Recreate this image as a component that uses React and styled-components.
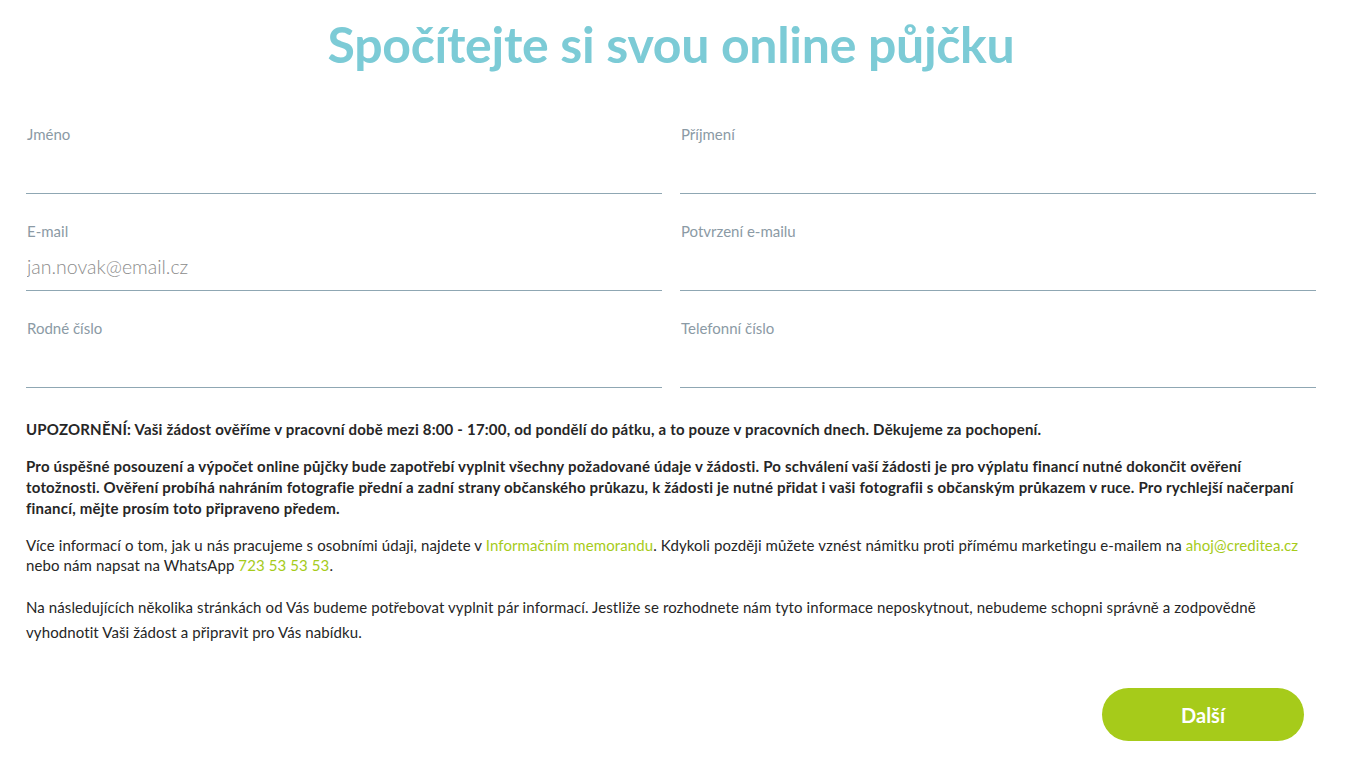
import React from 'react';
import styled, { createGlobalStyle } from 'styled-components';

const GlobalStyle = createGlobalStyle`
  html, body {
    margin: 0;
    padding: 0;
    background: #fff;
    font-family: Lato, "Open Sans", sans-serif;
    color: #262626;
  }
`;

const Page = styled.div`
  width: 1290px;
  padding: 13px 0 0 26px;
`;

const Title = styled.h1`
  margin: 0 0 50px;
  text-align: center;
  font-size: 50px;
  line-height: 62px;
  font-weight: 700;
  color: #7ccbd6;
  letter-spacing: -0.3px;
`;

const FieldGrid = styled.div`
  display: grid;
  grid-template-columns: 1fr 1fr;
  column-gap: 18px;
  row-gap: 28px;
`;

const Field = styled.label`
  box-sizing: border-box;
  display: flex;
  flex-direction: column;
  border-bottom: 1px solid #8fa7b3;
  height: 69px;
`;

const Label = styled.span`
  font-size: 15px;
  line-height: 18px;
  color: #8b9aa5;
  padding-left: 1px;
`;

const Input = styled.input`
  border: 0;
  outline: none;
  padding: 0 1px;
  margin-top: 12px;
  height: 28px;
  font-family: inherit;
  font-size: 19.5px;
  font-weight: 300;
  color: #333;
  background: transparent;
  &::placeholder {
    color: #8c8c8c;
  }
`;

const Notes = styled.div`
  margin-top: 31px;
  font-size: 15px;
`;

const Para = styled.p`
  margin: 0 0 ${(p) => p.$mb || '14px'};
  line-height: ${(p) => p.$lh || '21px'};
  font-weight: ${(p) => (p.$bold ? 700 : 400)};
  letter-spacing: ${(p) => (p.$bold ? '0.2px' : '0.1px')};
  color: #262626;
  & + & {
    margin-top: 16px;
  }
`;

const Link = styled.a`
  color: #a6cb1a;
  text-decoration: none;
`;

const Footer = styled.div`
  display: flex;
  justify-content: flex-end;
  padding: 29px 12px 0 0;
`;

const NextButton = styled.button`
  width: 202px;
  height: 53px;
  border: 0;
  border-radius: 27px;
  background: #a6cb1a;
  color: #fff;
  font-family: inherit;
  font-size: 20px;
  font-weight: 700;
  cursor: pointer;
`;

const fields = [
  { label: 'Jméno' },
  { label: 'Příjmení' },
  { label: 'E-mail', placeholder: 'jan.novak@email.cz' },
  { label: 'Potvrzení e-mailu' },
  { label: 'Rodné číslo' },
  { label: 'Telefonní číslo' },
];

export default function App() {
  return (
    <>
      <GlobalStyle />
      <Page>
        <Title>Spočítejte si svou online půjčku</Title>
        <FieldGrid>
          {fields.map((f) => (
            <Field key={f.label}>
              <Label>{f.label}</Label>
              <Input placeholder={f.placeholder || ''} />
            </Field>
          ))}
        </FieldGrid>
        <Notes>
          <Para $bold>
            UPOZORNĚNÍ: Vaši žádost ověříme v pracovní době mezi 8:00 - 17:00, od pondělí do pátku, a to pouze v
            pracovních dnech. Děkujeme za pochopení.
          </Para>
          <Para $bold>
            Pro úspěšné posouzení a výpočet online půjčky bude zapotřebí vyplnit všechny požadované údaje v žádosti. Po
            schválení vaší žádosti je pro výplatu financí nutné dokončit ověření totožnosti. Ověření probíhá nahráním
            fotografie přední a zadní strany občanského průkazu, k žádosti je nutné přidat i vaši fotografii s
            občanským průkazem v ruce. Pro rychlejší načerpaní financí, mějte prosím toto připraveno předem.
          </Para>
          <Para $lh="20px" $mb="20px">
            Více informací o tom, jak u nás pracujeme s osobními údaji, najdete v{' '}
            <Link href="#">Informačním memorandu</Link>. Kdykoli později můžete vznést námitku proti přímému
            marketingu e-mailem na <Link href="#">ahoj@creditea.cz</Link> nebo nám napsat na WhatsApp{' '}
            <Link href="#">723 53 53 53</Link>.
          </Para>
          <Para $lh="25px">
            Na následujících několika stránkách od Vás budeme potřebovat vyplnit pár informací. Jestliže se rozhodnete
            nám tyto informace neposkytnout, nebudeme schopni správně a zodpovědně vyhodnotit Vaši žádost a připravit
            pro Vás nabídku.
          </Para>
        </Notes>
        <Footer>
          <NextButton>Další</NextButton>
        </Footer>
      </Page>
    </>
  );
}
